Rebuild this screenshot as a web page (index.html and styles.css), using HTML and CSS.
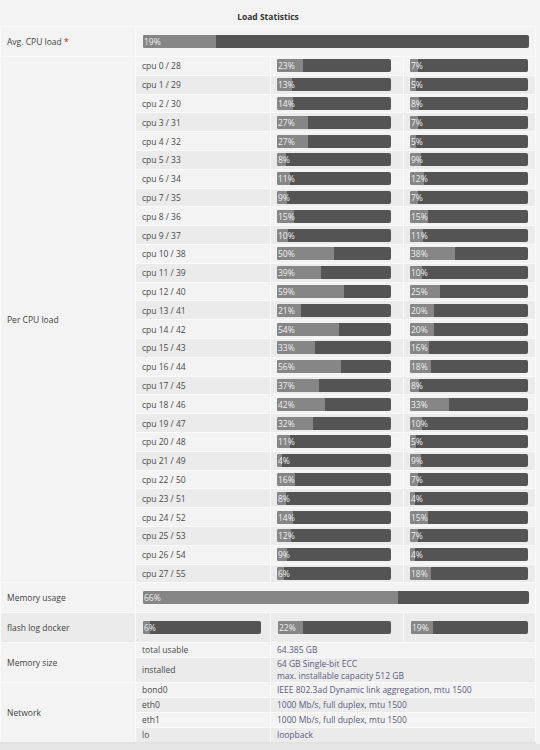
FILE: index.html
```html
<!DOCTYPE html>
<html lang="en">
<head>
    <meta charset="UTF-8">
    <meta name="viewport" content="width=device-width, initial-scale=1.0">
    <title>Load Statistics</title>
    <link rel="stylesheet" href="styles.css">
</head>
<body>
    <div class="panel">
        <table class="stats" id="stats">
            <colgroup>
                <col class="c-label">
                <col class="c-name">
                <col class="c-bar">
                <col class="c-bar2">
            </colgroup>
            <thead>
                <tr><th colspan="4">Load Statistics</th></tr>
            </thead>
            <tbody id="cpu-body">
                <tr class="big">
                    <td class="label">Avg. CPU load <span class="req">*</span></td>
                    <td colspan="3" class="val"><div class="bar"><div class="fill" style="width:19%"></div><span>19%</span></div></td>
                </tr>
            </tbody>
            <tbody id="rest">
                <tr class="big">
                    <td class="label">Memory usage</td>
                    <td colspan="3" class="val"><div class="bar"><div class="fill" style="width:66%"></div><span>66%</span></div></td>
                </tr>
                <tr class="big alt">
                    <td class="label">flash log docker</td>
                    <td class="val v1"><div class="bar"><div class="fill" style="width:6%"></div><span>6%</span></div></td>
                    <td class="val v2"><div class="bar"><div class="fill" style="width:22%"></div><span>22%</span></div></td>
                    <td class="val v3"><div class="bar"><div class="fill" style="width:19%"></div><span>19%</span></div></td>
                </tr>
                <tr class="small">
                    <td class="label" rowspan="2">Memory size</td>
                    <td class="name">total usable</td>
                    <td colspan="2" class="info">64.385 GB</td>
                </tr>
                <tr class="small alt">
                    <td class="name">installed</td>
                    <td colspan="2" class="info">64 GB Single-bit ECC<br>max. installable capacity 512 GB</td>
                </tr>
                <tr class="small">
                    <td class="label" rowspan="4">Network</td>
                    <td class="name">bond0</td>
                    <td colspan="2" class="info">IEEE 802.3ad Dynamic link aggregation, mtu 1500</td>
                </tr>
                <tr class="small alt">
                    <td class="name">eth0</td>
                    <td colspan="2" class="info">1000 Mb/s, full duplex, mtu 1500</td>
                </tr>
                <tr class="small">
                    <td class="name">eth1</td>
                    <td colspan="2" class="info">1000 Mb/s, full duplex, mtu 1500</td>
                </tr>
                <tr class="small alt">
                    <td class="name">lo</td>
                    <td colspan="2" class="info">loopback</td>
                </tr>
            </tbody>
        </table>
    </div>

    <script>
        // load per core: [ first thread, hyperthread sibling ]
        const cpus = [
            [23, 7], [13, 5], [14, 8], [27, 7], [27, 5], [8, 9], [11, 12],
            [9, 7], [15, 15], [10, 11], [50, 38], [39, 10], [59, 25], [21, 20],
            [54, 20], [33, 16], [56, 18], [37, 8], [42, 33], [32, 10], [11, 5],
            [4, 9], [16, 7], [8, 4], [14, 15], [12, 7], [9, 4], [6, 18]
        ];

        function bar(pct) {
            return '<div class="bar"><div class="fill" style="width:' + pct + '%"></div><span>' + pct + '%</span></div>';
        }

        const body = document.getElementById('cpu-body');
        cpus.forEach((load, i) => {
            const tr = document.createElement('tr');
            tr.className = 'cpu' + (i % 2 ? ' alt' : '');
            let html = '';
            if (i === 0) {
                html += '<td class="label" rowspan="' + cpus.length + '">Per CPU load</td>';
            }
            html += '<td class="name">cpu ' + i + ' / ' + (i + 28) + '</td>';
            html += '<td class="val v2">' + bar(load[0]) + '</td>';
            html += '<td class="val v3">' + bar(load[1]) + '</td>';
            tr.innerHTML = html;
            body.appendChild(tr);
        });
    </script>
</body>
</html>
```

FILE: styles.css
```css
body {
    margin: 0;
    padding: 0;
    background-color: #e6e6e6;
    font-family: "Open Sans", "DejaVu Sans", sans-serif;
    font-size: 8.5px;
    color: #4a4a4a;
}
.panel {
    padding-top: 6px;
    width: 540px;
    background: #f4f4f4;
}
.stats {
    width: 535px;
    border-collapse: collapse;
    table-layout: fixed;
    background: #f3f3f3;
    border-bottom: 2px solid #e2e2e2;
}
.c-label { width: 135px; }
.c-name { width: 135px; }
.c-bar { width: 133px; }
.c-bar2 { width: 132px; }

.stats th {
    height: 20px;
    font-weight: bold;
    font-size: 8.5px;
    color: #333;
    text-align: center;
    border-bottom: 1px solid #fafafa;
    padding: 0;
}
.stats td {
    padding: 0 6px;
    border: 1px solid #fafafa;
    vertical-align: middle;
    white-space: nowrap;
}
.stats td.label {
    background: #f3f3f3;
    color: #444;
}
.stats td.v1 {
    padding: 0 9px 0 7px;
}
.stats td.v2 {
    padding: 0 12px 0 6px;
}
.stats td.v3 {
    padding: 0 7px 0 6px;
}
.req {
    color: #d00;
}
.big td {
    height: 29px;
}
.big td.val {
    padding-left: 7px;
}
.cpu td {
    height: 17.8px;
}
.cpu.alt td:not(.label),
.small.alt td:not(.label) {
    background: #ebebeb;
}
.big.alt td {
    background: #ebebeb;
}
.small td {
    height: 14px;
    line-height: 14px;
}
.small td.info {
    color: #5c5c80;
}
.small.alt td.info {
    line-height: 12px;
}
.bar {
    position: relative;
    height: 13px;
    background: #545454;
    border-radius: 2px;
    overflow: hidden;
}
.bar .fill {
    height: 100%;
    background: #868686;
}
.bar span {
    position: absolute;
    left: 1px;
    top: 0;
    line-height: 13px;
    color: #f0f0f0;
    font-size: 8.5px;
}
```
